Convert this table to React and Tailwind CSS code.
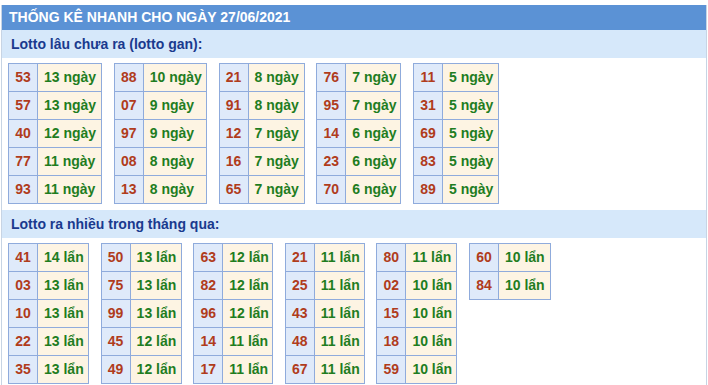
import React from 'react';

const ganTables = [
  { w: 64, rows: [['53', '13 ngày'], ['57', '13 ngày'], ['40', '12 ngày'], ['77', '11 ngày'], ['93', '11 ngày']] },
  { w: 63, rows: [['88', '10 ngày'], ['07', '9 ngày'], ['97', '9 ngày'], ['08', '8 ngày'], ['13', '8 ngày']] },
  { w: 56, rows: [['21', '8 ngày'], ['91', '8 ngày'], ['12', '7 ngày'], ['16', '7 ngày'], ['65', '7 ngày']] },
  { w: 55, rows: [['76', '7 ngày'], ['95', '7 ngày'], ['14', '6 ngày'], ['23', '6 ngày'], ['70', '6 ngày']] },
  { w: 56, rows: [['11', '5 ngày'], ['31', '5 ngày'], ['69', '5 ngày'], ['83', '5 ngày'], ['89', '5 ngày']] },
];

const nhieuTables = [
  { w: 51, rows: [['41', '14 lẩn'], ['03', '13 lẩn'], ['10', '13 lẩn'], ['22', '13 lẩn'], ['35', '13 lẩn']] },
  { w: 51, rows: [['50', '13 lẩn'], ['75', '13 lẩn'], ['99', '13 lẩn'], ['45', '12 lẩn'], ['49', '12 lẩn']] },
  { w: 50, rows: [['63', '12 lẩn'], ['82', '12 lẩn'], ['96', '12 lẩn'], ['14', '11 lẩn'], ['17', '11 lẩn']] },
  { w: 50, rows: [['21', '11 lẩn'], ['25', '11 lẩn'], ['43', '11 lẩn'], ['48', '11 lẩn'], ['67', '11 lẩn']] },
  { w: 51, rows: [['80', '11 lẩn'], ['02', '10 lẩn'], ['15', '10 lẩn'], ['18', '10 lẩn'], ['59', '10 lẩn']] },
  { w: 52, rows: [['60', '10 lẩn'], ['84', '10 lẩn']] },
];

const LotoTable = ({ data }) => (
  <div className="border-l border-t border-[#8fabdc] self-start">
    {data.rows.map(([num, val]) => (
      <div key={num} className="flex h-[28px]">
        <div className="w-[29px] border-r border-b border-[#8fabdc] bg-[#dfeafa] text-[#b03c1c] flex items-center justify-center">
          {num}
        </div>
        <div
          className="border-r border-b border-[#8fabdc] bg-[#fdf4e3] text-[#1f7d1f] flex items-center pl-[6px] whitespace-nowrap"
          style={{ width: data.w }}
        >
          {val}
        </div>
      </div>
    ))}
  </div>
);

const SectionTitle = ({ children }) => (
  <div className="h-[28px] bg-[#d6e8fa] text-[#1a3a8e] font-bold text-[14px] pl-[9px] flex items-center">
    {children}
  </div>
);

const App = () => {
  return (
    <div
      className="w-[708px] h-[385px] bg-white overflow-hidden pt-[5px]"
      style={{ fontFamily: '"Liberation Sans", Arial, sans-serif' }}
    >
      <div className="ml-[1px] w-[706px] border-x border-[#c7d4e4] h-[380px]">
        <div className="h-[25px] bg-[#5b92d5] text-white font-bold text-[14px] pl-[7px] flex items-center">
          THỐNG KÊ NHANH CHO NGÀY 27/06/2021
        </div>

        <SectionTitle>Lotto lâu chưa ra (lotto gan):</SectionTitle>
        <div className="flex gap-[11.75px] pl-[6px] pt-[5px] pb-[6px] font-bold text-[14px]">
          {ganTables.map((t, i) => (
            <LotoTable key={i} data={t} />
          ))}
        </div>

        <SectionTitle>Lotto ra nhiều trong tháng qua:</SectionTitle>
        <div className="flex gap-[11.6px] pl-[6px] pt-[5px] font-bold text-[14px]">
          {nhieuTables.map((t, i) => (
            <LotoTable key={i} data={t} />
          ))}
        </div>
      </div>
    </div>
  );
};

export default App;
